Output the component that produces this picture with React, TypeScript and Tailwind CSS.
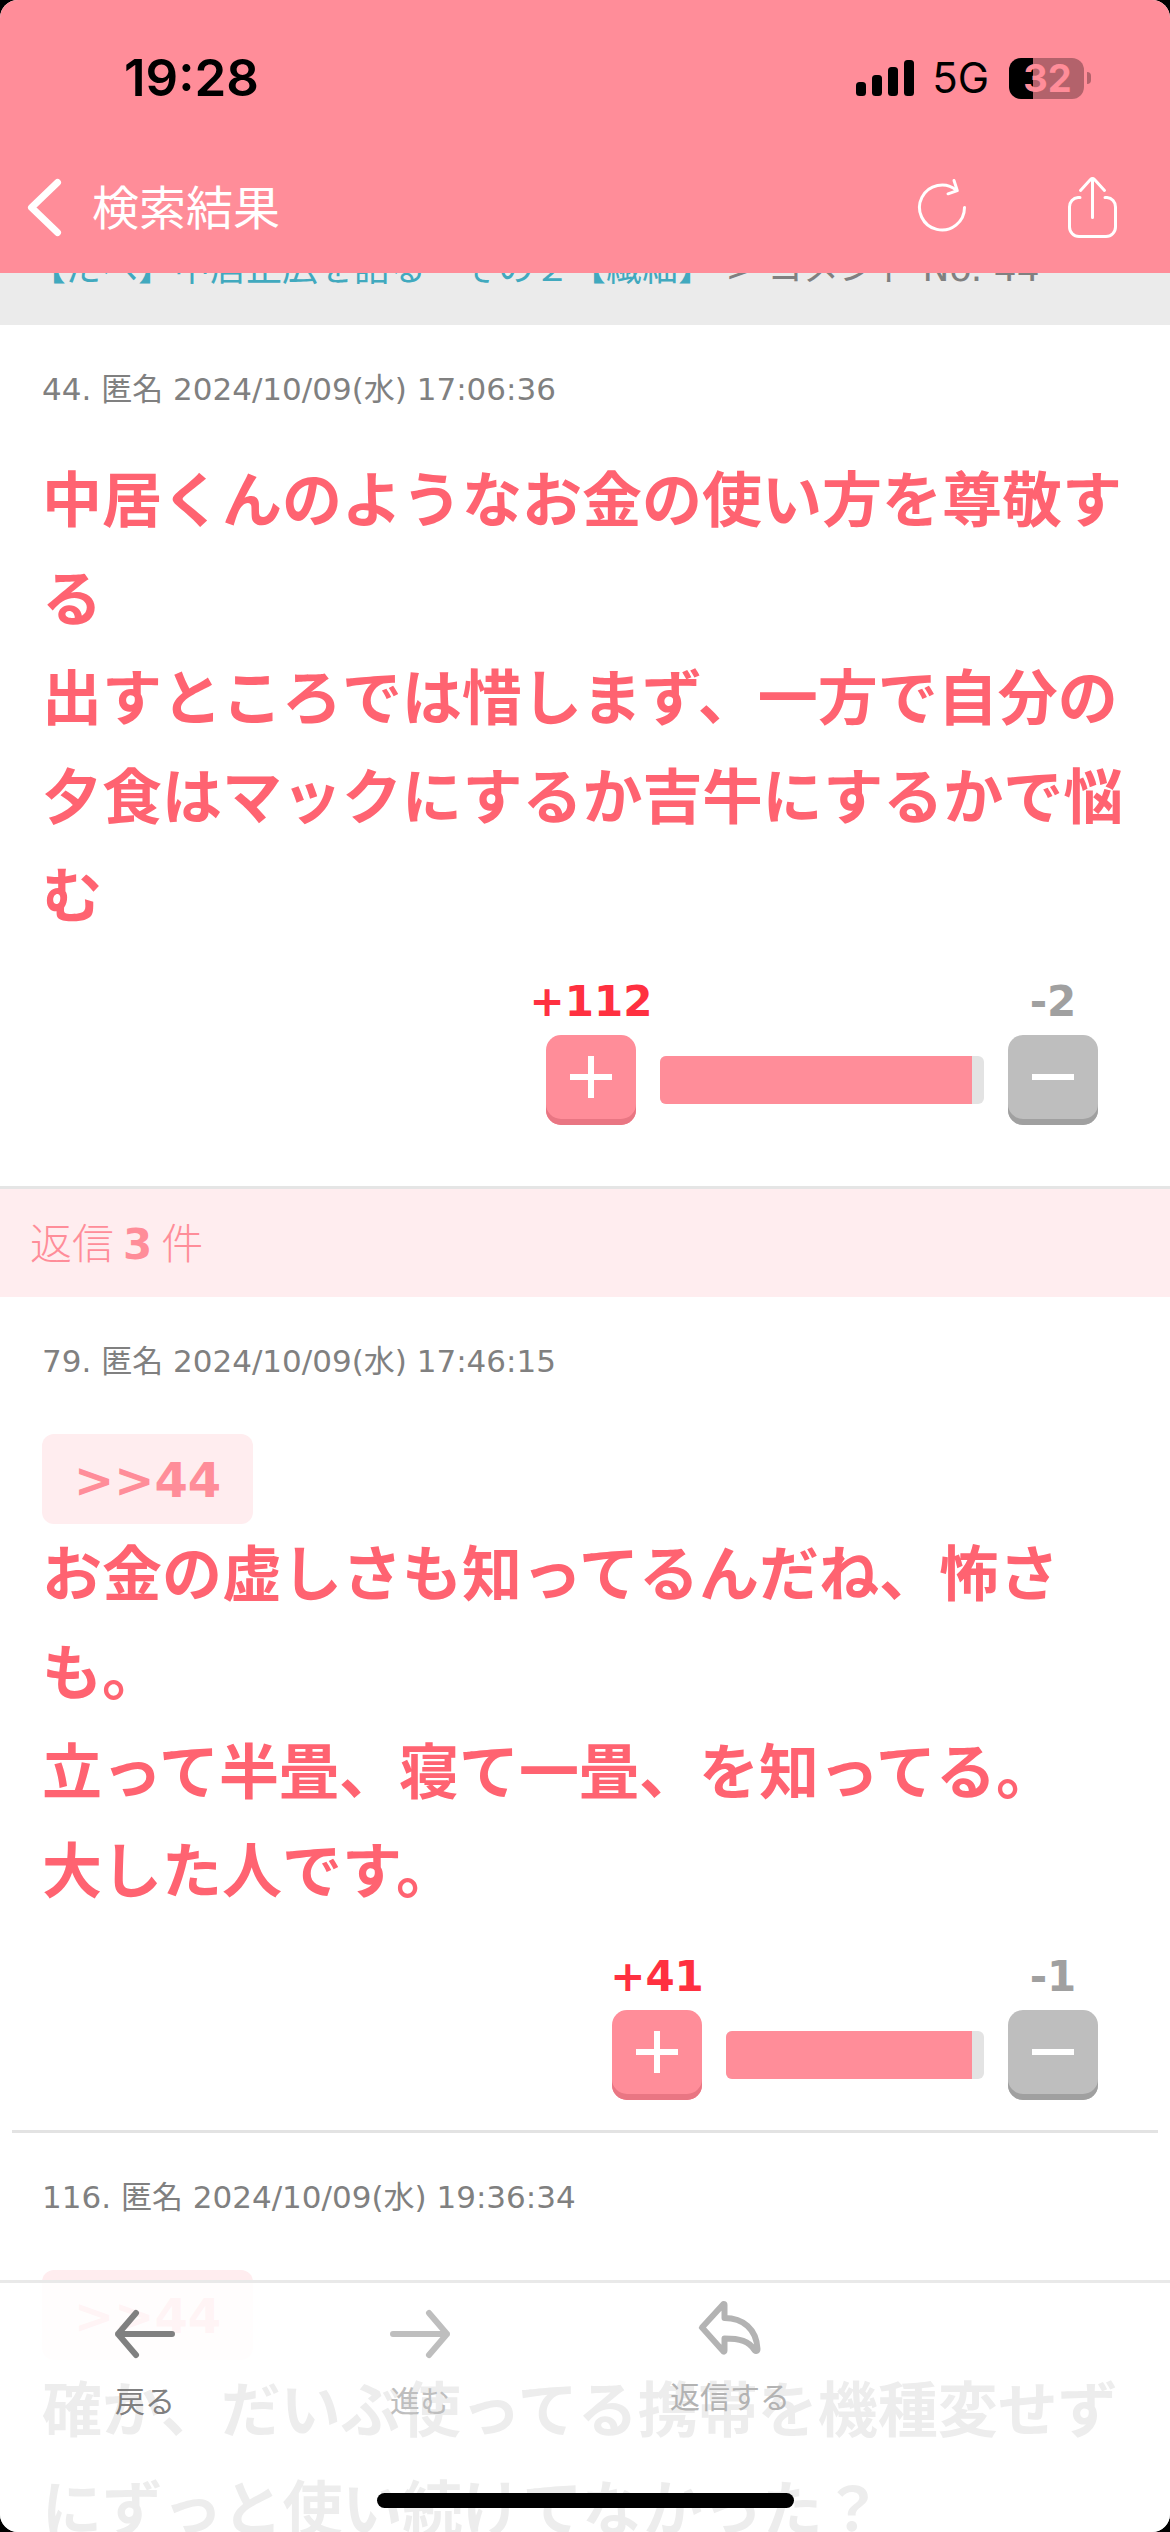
import React from "react";

type Comment = {
  no: number;
  date: string;
  replyTo?: number;
  lines: string[];
  plus?: number;
  minus?: number;
  barWidth?: string;
  textColor: string;
};

const main: Comment = {
  no: 44,
  date: "2024/10/09(水) 17:06:36",
  lines: [
    "中居くんのようなお金の使い方を尊敬する",
    "出すところでは惜しまず、一方で自分の夕食はマックにするか吉牛にするかで悩む",
  ],
  plus: 112,
  minus: 2,
  barWidth: "w-[324px]",
  textColor: "text-[#ff6371]",
};

const replies: Comment[] = [
  {
    no: 79,
    date: "2024/10/09(水) 17:46:15",
    replyTo: 44,
    lines: [
      "お金の虚しさも知ってるんだね、怖さも。",
      "立って半畳、寝て一畳、を知ってる。",
      "大した人です。",
    ],
    plus: 41,
    minus: 1,
    barWidth: "w-[258px]",
    textColor: "text-[#ff6371]",
  },
  {
    no: 116,
    date: "2024/10/09(水) 19:36:34",
    replyTo: 44,
    lines: ["確か、だいぶ使ってる携帯を機種変せずにずっと使い続けてなかった？"],
    textColor: "text-[#484848]",
  },
];

function StatusBar() {
  return (
    <div className="flex items-center justify-between pt-[48px] pr-[79px] pl-[124px] font-['Inter','Liberation_Sans',sans-serif] text-black">
      <time className="text-[51px] leading-[60px] font-semibold">19:28</time>
      <div className="flex items-center">
        <svg className="h-[36px] w-[58px]" viewBox="0 0 58 36" aria-label="電波強度">
          <rect x="0" y="22" width="10" height="14" rx="3.5" />
          <rect x="16" y="15" width="10" height="21" rx="3.5" />
          <rect x="32" y="7" width="10" height="29" rx="3.5" />
          <rect x="48" y="0" width="10" height="36" rx="3.5" />
        </svg>
        <span className="ml-[18px] text-[42px] leading-[48px]">5G</span>
        <div className="ml-5 flex items-center gap-[3px]">
          <div className="flex h-[41px] w-[75px] items-center justify-center rounded-[12px] bg-[linear-gradient(to_right,#000_24px,#b3626b_24px)] pl-[2px] text-[38px] leading-[41px] font-bold text-[#ff8d99]">
            32
          </div>
          <div className="h-[12px] w-[4px] rounded-r-full bg-[#b3626b]" />
        </div>
      </div>
    </div>
  );
}

function NavBar() {
  return (
    <div className="flex items-center pt-[63px] pr-[48px] pb-[30px] pl-[24px] text-white">
      <button type="button" aria-label="前の画面" className="mr-[26px]">
        <svg className="h-[60px] w-[42px]" viewBox="0 0 42 60" fill="none" stroke="currentColor" strokeWidth="7" strokeLinecap="round" strokeLinejoin="round">
          <path d="M33.500 5.500L7.500 30.500L33.500 55.500" />
        </svg>
      </button>
      <h1 className="grow pt-[3px] text-[47px] leading-[69px]">検索結果</h1>
      <button type="button" aria-label="再読み込み" className="mr-[90px]">
        <svg className="h-[60px] w-[60px]" viewBox="0 0 60 60" fill="none" stroke="currentColor" strokeWidth="3" strokeLinecap="round" strokeLinejoin="round">
          <path d="M52.500 30.500A22.500 22.500 0 1 1 44.500 13.300" />
          <path d="M42 3.500L45.300 13.600L36 16.800" />
        </svg>
      </button>
      <button type="button" aria-label="共有">
        <svg className="h-[66px] w-[60px]" viewBox="0 0 60 66" fill="none" stroke="currentColor" strokeWidth="3" strokeLinecap="round" strokeLinejoin="round">
          <path d="M18 23.500H16A9.500 9.500 0 0 0 7.500 33V53A9.500 9.500 0 0 0 17 62.500H44A9.500 9.500 0 0 0 53.500 53V33A9.500 9.500 0 0 0 45 23.500H43" />
          <path d="M30.500 43.500V5M18.500 16.500L28.500 5.500Q30.500 3.500 32.500 5.500L42.500 16.500" />
        </svg>
      </button>
    </div>
  );
}

function Votes({ plus, minus, barWidth }: { plus: number; minus: number; barWidth: string }) {
  return (
    <div className="mt-[34px] flex items-end justify-end gap-6 pr-[30px]">
      <div className="flex w-[90px] flex-col items-center gap-3">
        <span className="text-[42px] leading-[42px] font-bold text-[#ff3040]">+{plus}</span>
        <button type="button" aria-label="プラス" className="flex h-[90px] w-[90px] items-center justify-center rounded-[15px] bg-[#ff8d99] pb-[6px] shadow-[inset_0_-6px_0_#e97683]">
          <svg className="h-[42px] w-[42px]" viewBox="0 0 42 42" stroke="#fff" strokeWidth="6">
            <path d="M21 0V42M0 21H42" />
          </svg>
        </button>
      </div>
      <div className={`${barWidth} mb-[21px] flex h-12 overflow-hidden rounded-[6px] bg-[#e3e3e3]`}>
        <div className="mr-3 grow bg-[#ff8d99]" />
      </div>
      <div className="flex w-[90px] flex-col items-center gap-3">
        <span className="text-[42px] leading-[42px] font-bold text-[#a0a0a0]">-{minus}</span>
        <button type="button" aria-label="マイナス" className="flex h-[90px] w-[90px] items-center justify-center rounded-[15px] bg-[#bebebe] pb-[6px] shadow-[inset_0_-6px_0_#a0a0a0]">
          <svg className="h-[42px] w-[42px]" viewBox="0 0 42 42" stroke="#fff" strokeWidth="6">
            <path d="M0 21H42" />
          </svg>
        </button>
      </div>
    </div>
  );
}

function CommentItem({ c }: { c: Comment }) {
  return (
    <article id={`comment${c.no}`} className="px-[42px] pt-10">
      <p className="mb-[37px] text-[31px] leading-[48px] text-[#808080]">
        {c.no}. 匿名 {c.date}
      </p>
      {c.replyTo !== undefined && (
        <div className="flex pt-3">
          <a href={`#comment${c.replyTo}`} className="rounded-[12px] bg-[#ffedef] px-[32px] pt-[2px] text-[48px] leading-[88px] font-bold text-[#ff8d99]">
            &gt;&gt;{c.replyTo}
          </a>
        </div>
      )}
      <div className={`${c.textColor} pt-[2px] text-[60px] leading-[99px] font-bold`}>
        {c.lines.map((l) => (
          <p key={l}>{l}</p>
        ))}
      </div>
      {c.plus !== undefined && c.minus !== undefined && c.barWidth && (
        <Votes plus={c.plus} minus={c.minus} barWidth={c.barWidth} />
      )}
    </article>
  );
}

function Toolbar() {
  return (
    <footer className="absolute inset-x-0 bottom-0 border-t-[3px] border-[#e9e9e9] bg-white/90">
      <div className="flex h-[210px] items-start pl-[85px] text-[30px] leading-[48px]">
        <button type="button" className="mt-[23px] flex w-[120px] flex-col items-center gap-[16px] text-[#808080]">
          <svg className="h-[56px] w-[66px]" viewBox="0 0 66 56" fill="none" stroke="currentColor" strokeWidth="6" strokeLinecap="round" strokeLinejoin="round">
            <path d="M24 7L6 28L24 49M6 28H60" />
          </svg>
          戻る
        </button>
        <button type="button" disabled className="mt-[23px] ml-[155px] flex w-[120px] flex-col items-center gap-[16px] text-[#bebebe]">
          <svg className="h-[56px] w-[66px]" viewBox="0 0 66 56" fill="none" stroke="currentColor" strokeWidth="6" strokeLinecap="round" strokeLinejoin="round">
            <path d="M42 7L60 28L42 49M60 28H6" />
          </svg>
          進む
        </button>
        <button type="button" className="mt-[16px] ml-[170px] flex w-[160px] flex-col items-center gap-[15px] text-[#b3b3b3]">
          <svg className="h-[60px] w-[66px]" viewBox="0 0 66 60" fill="none" stroke="currentColor" strokeWidth="6" strokeLinecap="round" strokeLinejoin="round">
            <path d="M26.500 5Q27.500 5 27.500 6V19C46 19 59.500 30 60.500 50C60.500 52.500 58 52.500 57 50.500C52 42 43 39.500 27.500 39.500V51.500Q27.500 53 26.500 52.500L5 28.500Z" />
          </svg>
          返信する
        </button>
      </div>
      <div className="mx-auto mb-[24px] h-[15px] w-[417px] rounded-full bg-black" />
    </footer>
  );
}

export default function App() {
  return (
    <div className="h-screen bg-black font-['DejaVu_Sans','Noto_Sans_CJK_JP',sans-serif]" lang="ja">
      <div className="relative flex h-full flex-col overflow-hidden rounded-[18px] bg-white">
        <header className="relative z-10 shrink-0 bg-[#ff8d99]">
          <StatusBar />
          <NavBar />
        </header>
        <main className="-mt-[31px] min-h-0 grow overflow-hidden">
          <nav className="bg-[#ebebeb] px-[30px] pb-[29px] text-[36px] leading-[54px] whitespace-nowrap text-[#808080]">
            <a href="#topic" className="text-[#41a9be]">【だべ】中居正広を語る　その２【繊細】</a>
            {" > "}コメント No. 44
          </nav>
          <section className="border-b-[3px] border-[#e5e5e5] pb-[61px]">
            <CommentItem c={main} />
          </section>
          <h2 className="flex items-center gap-[9px] bg-[#ffedef] px-[30px] pt-[3px] text-[42px] leading-[105px] font-light text-[#ff8d99]">
            返信<strong className="font-bold">{3}</strong>件
          </h2>
          <section>
            {replies.map((c, i) => (
              <React.Fragment key={c.no}>
                {i > 0 && <hr className="mx-3 mt-[30px] border-t-[3px] border-[#e3e3e3]" />}
                <CommentItem c={c} />
              </React.Fragment>
            ))}
          </section>
        </main>
        <Toolbar />
      </div>
    </div>
  );
}
